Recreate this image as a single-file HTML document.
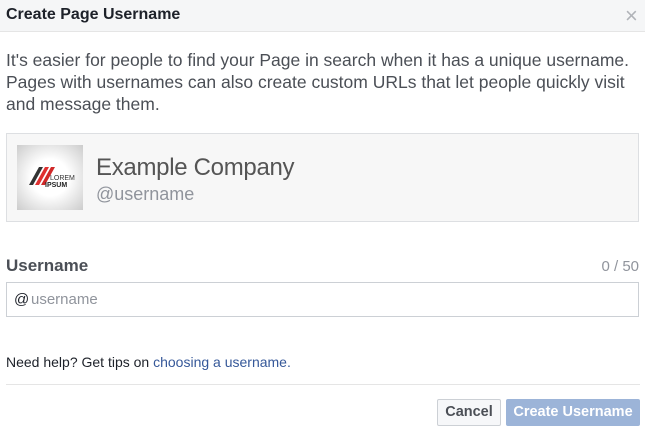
<!DOCTYPE html><html><head><style>
body{margin:0;width:645px;height:435px;background:#fff;font-family:"Liberation Sans",sans-serif;color:#1d2129;position:relative;overflow:hidden}
.a{position:absolute}
</style></head><body>
<div class="a" style="left:0;top:0;width:645px;height:31px;background:#f5f6f7;border-bottom:1px solid #e5e5e5"></div>
<div class="a" style="left:6px;top:6px;font-size:16px;font-weight:bold;color:#1d2129">Create Page Username</div>
<div class="a" style="left:625px;top:3px;font-size:22px;color:#b0b3b8">×</div>
<div class="a" style="left:6px;top:49px;width:636px;font-size:17.5px;line-height:22px;color:#4b4f56">It's easier for people to find your Page in search when it has a unique username. Pages with usernames can also create custom URLs that let people quickly visit and message them.</div>
<div class="a" style="left:6px;top:133px;width:631px;height:87px;border:1px solid #dddfe2;background:#f7f7f7"></div>
<div class="a" style="left:17px;top:145px;width:66px;height:65px;background:radial-gradient(#fff 40%,#ccc)">
<svg width="66" height="65"><polygon points="12,40 22,22 26,22 16,40" fill="#333"/><polygon points="18,40 28,22 32,22 22,40" fill="#e03030"/><polygon points="24,40 34,22 38,22 28,40" fill="#d02828"/><text x="33" y="35" font-size="7" font-family="Liberation Sans" fill="#333">LOREM</text><text x="28" y="42" font-size="7" font-weight="bold" font-family="Liberation Sans" fill="#222">IPSUM</text></svg></div>
<div class="a" style="left:96px;top:154px;font-size:24px;color:#555;letter-spacing:-0.3px">Example Company</div>
<div class="a" style="left:96px;top:184px;font-size:18px;color:#90949c">@username</div>
<div class="a" style="left:6px;top:256px;font-size:17px;font-weight:bold;color:#4b4f56">Username</div>
<div class="a" style="right:6px;top:258px;font-size:15px;color:#90949c">0 / 50</div>
<div class="a" style="left:6px;top:282px;width:631px;height:33px;border:1px solid #ccd0d5;background:#fff"></div>
<div class="a" style="left:14px;top:291px;font-size:15px;color:#1d2129">@</div>
<div class="a" style="left:31px;top:291px;font-size:15px;color:#90949c">username</div>
<div class="a" style="left:6px;top:354px;font-size:14px;color:#1d2129">Need help? Get tips on <span style="color:#365899">choosing a username.</span></div>
<div class="a" style="left:6px;top:384px;width:634px;height:1px;background:#e5e5e5"></div>
<div class="a" style="left:437px;top:399px;width:62px;height:25px;border:1px solid #ccd0d5;border-radius:2px;background:#f6f7f9;font-size:14.5px;font-weight:bold;color:#4b4f56;text-align:center;line-height:25px">Cancel</div>
<div class="a" style="left:506px;top:399px;width:134px;height:27px;border-radius:2px;background:#9cb4d8;font-size:14.5px;font-weight:bold;color:#fff;text-align:center;line-height:27px">Create Username</div>
</body></html>
